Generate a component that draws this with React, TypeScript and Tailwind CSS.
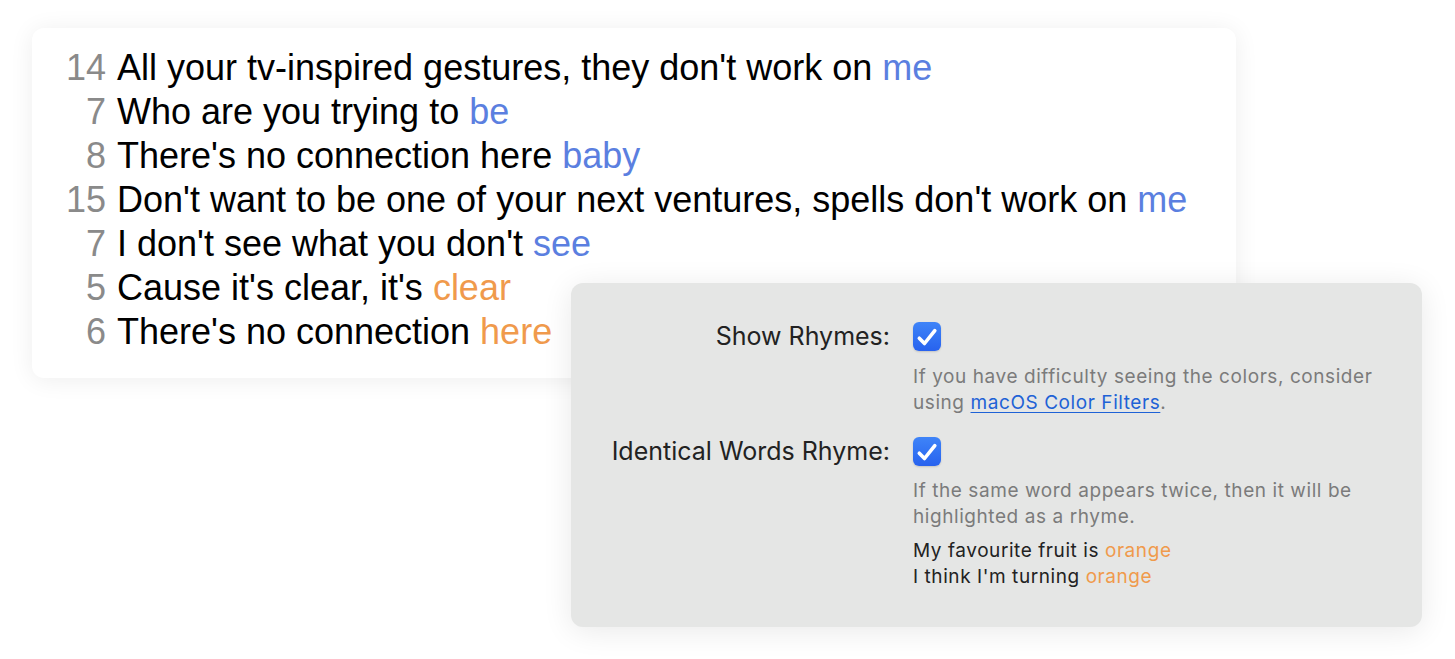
const lyrics = [
  { count: 14, text: 'All your tv-inspired gestures, they don\'t work on ', rhyme: 'me', tone: 'blue' },
  { count: 7, text: 'Who are you trying to ', rhyme: 'be', tone: 'blue' },
  { count: 8, text: "There's no connection here ", rhyme: 'baby', tone: 'blue' },
  { count: 15, text: "Don't want to be one of your next ventures, spells don't work on ", rhyme: 'me', tone: 'blue' },
  { count: 7, text: "I don't see what you don't ", rhyme: 'see', tone: 'blue' },
  { count: 5, text: "Cause it's clear, it's ", rhyme: 'clear', tone: 'orange' },
  { count: 6, text: "There's no connection ", rhyme: 'here', tone: 'orange' },
]

function Checkbox() {
  return (
    <div className="h-[29px] w-[28px] rounded-[6px] bg-gradient-to-b from-[#3f84f8] to-[#2862ee] shadow-[0_1px_2px_rgba(0,0,0,0.15)]">
      <svg viewBox="0 0 28 29" className="h-[29px] w-[28px]" fill="none" stroke="white" strokeWidth={3.6} strokeLinecap="round" strokeLinejoin="round">
        <path d="M6.3 16.2l5.2 5.3L21.8 8.6" />
      </svg>
    </div>
  )
}

export default function App() {
  return (
    <div className="relative h-[659px] w-full overflow-hidden bg-white">
      {/* Lyrics card */}
      <div className="ml-[32px] mt-[28px] w-[1204px] rounded-[12px] bg-white pb-[24px] pt-[18px] pl-[24px] shadow-[0_2px_24px_rgba(0,0,0,0.07)] font-['Liberation_Sans',Arial,sans-serif] text-[36px] leading-[44px]">
        {lyrics.map((line, i) => (
          <div key={i} className="flex">
            <span className="w-[50px] shrink-0 text-right text-[#8a8a8a]">{line.count}</span>
            <span className="ml-[11px] whitespace-pre text-black">
              {line.text}
              <span className={line.tone === 'blue' ? 'text-[#5b7fe0]' : 'text-[#f09a4c]'}>{line.rhyme}</span>
            </span>
          </div>
        ))}
      </div>

      {/* Settings panel */}
      <div className="absolute left-[571px] top-[283px] w-[851px] rounded-[12px] bg-[#e5e6e5] pb-[37px] pt-[39px] shadow-[0_4px_30px_rgba(0,0,0,0.09)] font-['Inter',sans-serif]">
        <div className="grid grid-cols-[319px_1fr] gap-x-[23px]">
          <div className="text-right text-[25px] leading-[29px] text-[#222]">Show Rhymes:</div>
          <div className="flex h-[29px] items-center">
            <Checkbox />
          </div>
          <div />
          <div className="mt-[13px] text-[19px] leading-[26px] tracking-[0.03em] text-[#7b7b7b]">
            If you have difficulty seeing the colors, consider
            <br />
            using <span className="text-[#1e62d6] underline underline-offset-[3px]">macOS Color Filters</span>.
          </div>

          <div className="mt-[21px] text-right text-[25px] leading-[29px] text-[#222]">Identical Words Rhyme:</div>
          <div className="mt-[21px] flex h-[29px] items-center">
            <Checkbox />
          </div>
          <div />
          <div className="mt-[12px] text-[19px] leading-[26px] tracking-[0.03em] text-[#7b7b7b]">
            If the same word appears twice, then it will be
            <br />
            highlighted as a rhyme.
          </div>
          <div />
          <div className="mt-[8px] text-[19px] leading-[26px] tracking-[0.03em] text-[#222]">
            My favourite fruit is <span className="text-[#f09a4c]">orange</span>
            <br />
            I think I'm turning <span className="text-[#f09a4c]">orange</span>
          </div>
        </div>
      </div>
    </div>
  )
}
